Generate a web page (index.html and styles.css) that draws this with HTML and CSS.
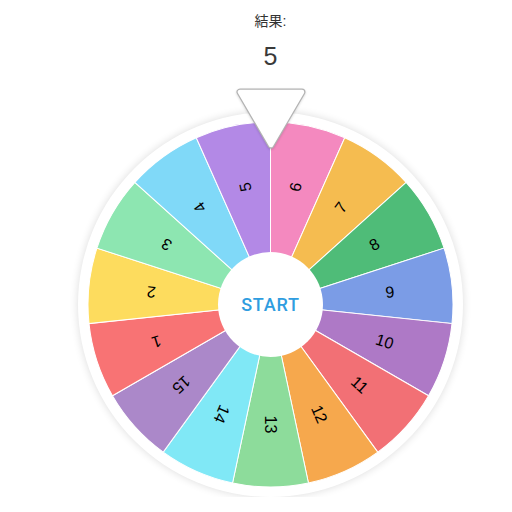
FILE: index.html
```html
<!DOCTYPE html>
<html lang="ja">
<head>
  <meta charset="UTF-8">
  <title>ルーレット</title>
  <link rel="stylesheet" href="styles.css">
</head>
<body>
  <div class="app">
    <div class="result-label">結果:</div>
    <div class="result-value">5</div>

    <div class="wheel">
      <svg class="wheel-svg" width="385" height="385" viewBox="0 0 385 385">
        <defs>
          <path id="wedge" d="M0 0 L0 -182.5 A182.5 182.5 0 0 1 74.23 -166.72 Z"/>
        </defs>
        <g transform="translate(192.5 192.5)" class="segments">
          <use href="#wedge" fill="#f489bf" transform="rotate(0)"/>
          <use href="#wedge" fill="#f5bc50" transform="rotate(24)"/>
          <use href="#wedge" fill="#4fbc78" transform="rotate(48)"/>
          <use href="#wedge" fill="#7b9ce6" transform="rotate(72)"/>
          <use href="#wedge" fill="#ae79c6" transform="rotate(96)"/>
          <use href="#wedge" fill="#f27075" transform="rotate(120)"/>
          <use href="#wedge" fill="#f6a84d" transform="rotate(144)"/>
          <use href="#wedge" fill="#8ddc9b" transform="rotate(168)"/>
          <use href="#wedge" fill="#80e8f6" transform="rotate(192)"/>
          <use href="#wedge" fill="#ab88c9" transform="rotate(216)"/>
          <use href="#wedge" fill="#f87374" transform="rotate(240)"/>
          <use href="#wedge" fill="#fddc5e" transform="rotate(264)"/>
          <use href="#wedge" fill="#8de6b1" transform="rotate(288)"/>
          <use href="#wedge" fill="#80d9f8" transform="rotate(312)"/>
          <use href="#wedge" fill="#b389e6" transform="rotate(336)"/>

          <text transform="rotate(12) translate(0 -120) rotate(-90)">6</text>
          <text transform="rotate(36) translate(0 -120) rotate(-90)">7</text>
          <text transform="rotate(60) translate(0 -120) rotate(-90)">8</text>
          <text transform="rotate(84) translate(0 -120) rotate(-90)">9</text>
          <text transform="rotate(108) translate(0 -120) rotate(-90)">10</text>
          <text transform="rotate(132) translate(0 -120) rotate(-90)">11</text>
          <text transform="rotate(156) translate(0 -120) rotate(-90)">12</text>
          <text transform="rotate(180) translate(0 -120) rotate(-90)">13</text>
          <text transform="rotate(204) translate(0 -120) rotate(-90)">14</text>
          <text transform="rotate(228) translate(0 -120) rotate(-90)">15</text>
          <text transform="rotate(252) translate(0 -120) rotate(-90)">1</text>
          <text transform="rotate(276) translate(0 -120) rotate(-90)">2</text>
          <text transform="rotate(300) translate(0 -120) rotate(-90)">3</text>
          <text transform="rotate(324) translate(0 -120) rotate(-90)">4</text>
          <text transform="rotate(348) translate(0 -120) rotate(-90)">5</text>
        </g>
      </svg>

      <button class="start">START</button>

      <svg class="pointer" width="74" height="64" viewBox="0 0 74 64">
        <polygon points="6,5 68,5 37,58" fill="#b3b3b3" stroke="#b3b3b3" stroke-width="7" stroke-linejoin="round"/>
        <polygon points="6,5 68,5 37,58" fill="#fff" stroke="#fff" stroke-width="4.5" stroke-linejoin="round"/>
      </svg>
    </div>
  </div>
</body>
</html>
```

FILE: styles.css
```css
body { margin: 0; background: #fff; color: #333; font-family: "Liberation Sans", "Noto Sans CJK JP", sans-serif; }
.app { width: 385px; margin-left: 78px; display: flex; flex-direction: column; align-items: center; }
.result-label { margin-top: 12px; font-size: 14px; line-height: 18px; color: #333; }
.result-value { margin-top: 11px; font-size: 25px; line-height: 30px; color: #3a3a3a; }

.wheel { position: relative; width: 385px; height: 385px; margin-top: 41px; border-radius: 50%; background: #fff; box-shadow: 0 0 8px rgba(0, 0, 0, 0.14); }
.wheel-svg { display: block; }
.segments use { stroke: #fff; stroke-width: 1; }
.segments text { font-family: "Liberation Sans", sans-serif; font-size: 16px; fill: #000; text-anchor: middle; dominant-baseline: central; }

.start { position: absolute; left: 140px; top: 140px; width: 105px; height: 105px; border: none; border-radius: 50%; background: #fff; color: #2f9de0; font-family: Roboto, sans-serif; font-size: 18px; font-weight: 500; letter-spacing: 0.8px; padding: 0; cursor: pointer; }
.pointer { position: absolute; left: 156px; top: -25px; filter: drop-shadow(0 1px 1px rgba(0, 0, 0, 0.15)); }
```
